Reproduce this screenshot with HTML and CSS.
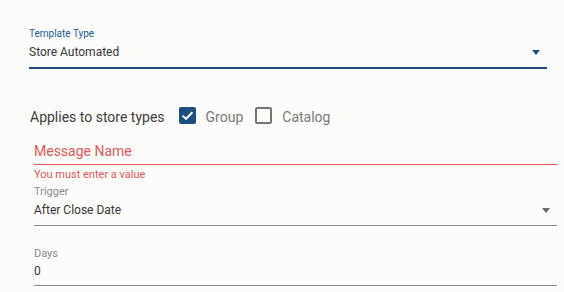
FILE: index.html
```html
<!DOCTYPE html>
<html>
<head>
<meta charset="utf-8">
<link rel="stylesheet" href="styles.css">
</head>
<body>
<div class="page">
  <div class="field select focused">
    <div class="label">Template Type</div>
    <div class="control">
      <span class="value">Store Automated</span>
      <span class="arrow"></span>
    </div>
  </div>

  <div class="storetypes">
    <span class="st-label">Applies to store types</span>
    <span class="cb checked"><svg viewBox="0 0 17 17" width="17" height="17"><rect x="0" y="0" width="17" height="17" rx="2" fill="#1b4f80"/><path d="M3.6 8.6 L7 11.9 L13.4 5.3" fill="none" stroke="#fff" stroke-width="2"/></svg></span>
    <span class="cb-text">Group</span>
    <span class="cb"></span>
    <span class="cb-text">Catalog</span>
  </div>

  <div class="lower">
    <div class="field error">
      <div class="control big">
        <span class="placeholder">Message Name</span>
      </div>
    </div>
    <div class="err-msg">You must enter a value</div>

    <div class="field select plain">
      <div class="label">Trigger</div>
      <div class="control">
        <span class="value">After Close Date</span>
        <span class="arrow grey"></span>
      </div>
    </div>

    <div class="field plain days">
      <div class="label">Days</div>
      <div class="control">
        <span class="value">0</span>
      </div>
    </div>
  </div>
</div>
</body>
</html>
```

FILE: styles.css
```css
html, body {
  margin: 0;
  padding: 0;
  background: #fcfcfa;
}
body {
  font-family: Roboto, "Liberation Sans", sans-serif;
  color: #333;
}
.page {
  width: 564px;
  height: 292px;
  overflow: hidden;
}
.field.focused {
  margin: 28px 17px 0 29px;
}
.label {
  font-size: 10px;
  line-height: 12px;
  color: #8a8a8a;
}
.focused .label {
  color: #235f94;
}
.control {
  display: flex;
  align-items: center;
  justify-content: space-between;
  margin-top: 4px;
  font-size: 12px;
  line-height: 16px;
  padding-bottom: 7px;
  border-bottom: 1px solid #8a8a8a;
}
.focused .control {
  border-bottom: 2px solid #1b4f80;
}
.value {
  color: #383838;
}
.arrow {
  width: 0;
  height: 0;
  border-left: 4px solid transparent;
  border-right: 4px solid transparent;
  border-top: 5px solid #1b4f80;
  margin-right: 7px;
}
.arrow.grey {
  border-top-color: #6b6b6b;
}

.storetypes {
  display: flex;
  align-items: flex-start;
  margin: 38px 0 0 30px;
  height: 20px;
}
.st-label {
  font-size: 14px;
  line-height: 20px;
  color: #3c3c3c;
  margin-right: 14px;
}
.cb {
  width: 17px;
  height: 17px;
  box-sizing: border-box;
  border: 2px solid #757575;
  border-radius: 2px;
}
.cb.checked {
  border: 0;
}
.cb svg {
  display: block;
}
.cb-text {
  font-size: 14px;
  line-height: 20px;
  color: #7a7a7a;
  margin-left: 10px;
  margin-right: 12px;
}

.lower {
  margin: 14px 7px 0 34px;
}
.field.error .control {
  margin-top: 0;
  font-size: 14px;
  line-height: 20px;
  padding-bottom: 3px;
  border-bottom: 1px solid #e2575b;
}
.placeholder {
  color: #e2575b;
}
.err-msg {
  margin-top: 3px;
  font-size: 11px;
  line-height: 14px;
  color: #e2575b;
}
.plain .label {
  font-size: 11px;
  line-height: 14px;
}
.plain {
  margin-top: 3px;
}
.plain .control {
  margin-top: 3px;
}
.days {
  margin-top: 21px;
}
.days .control {
  margin-top: 2px;
  padding-bottom: 6px;
}
```
